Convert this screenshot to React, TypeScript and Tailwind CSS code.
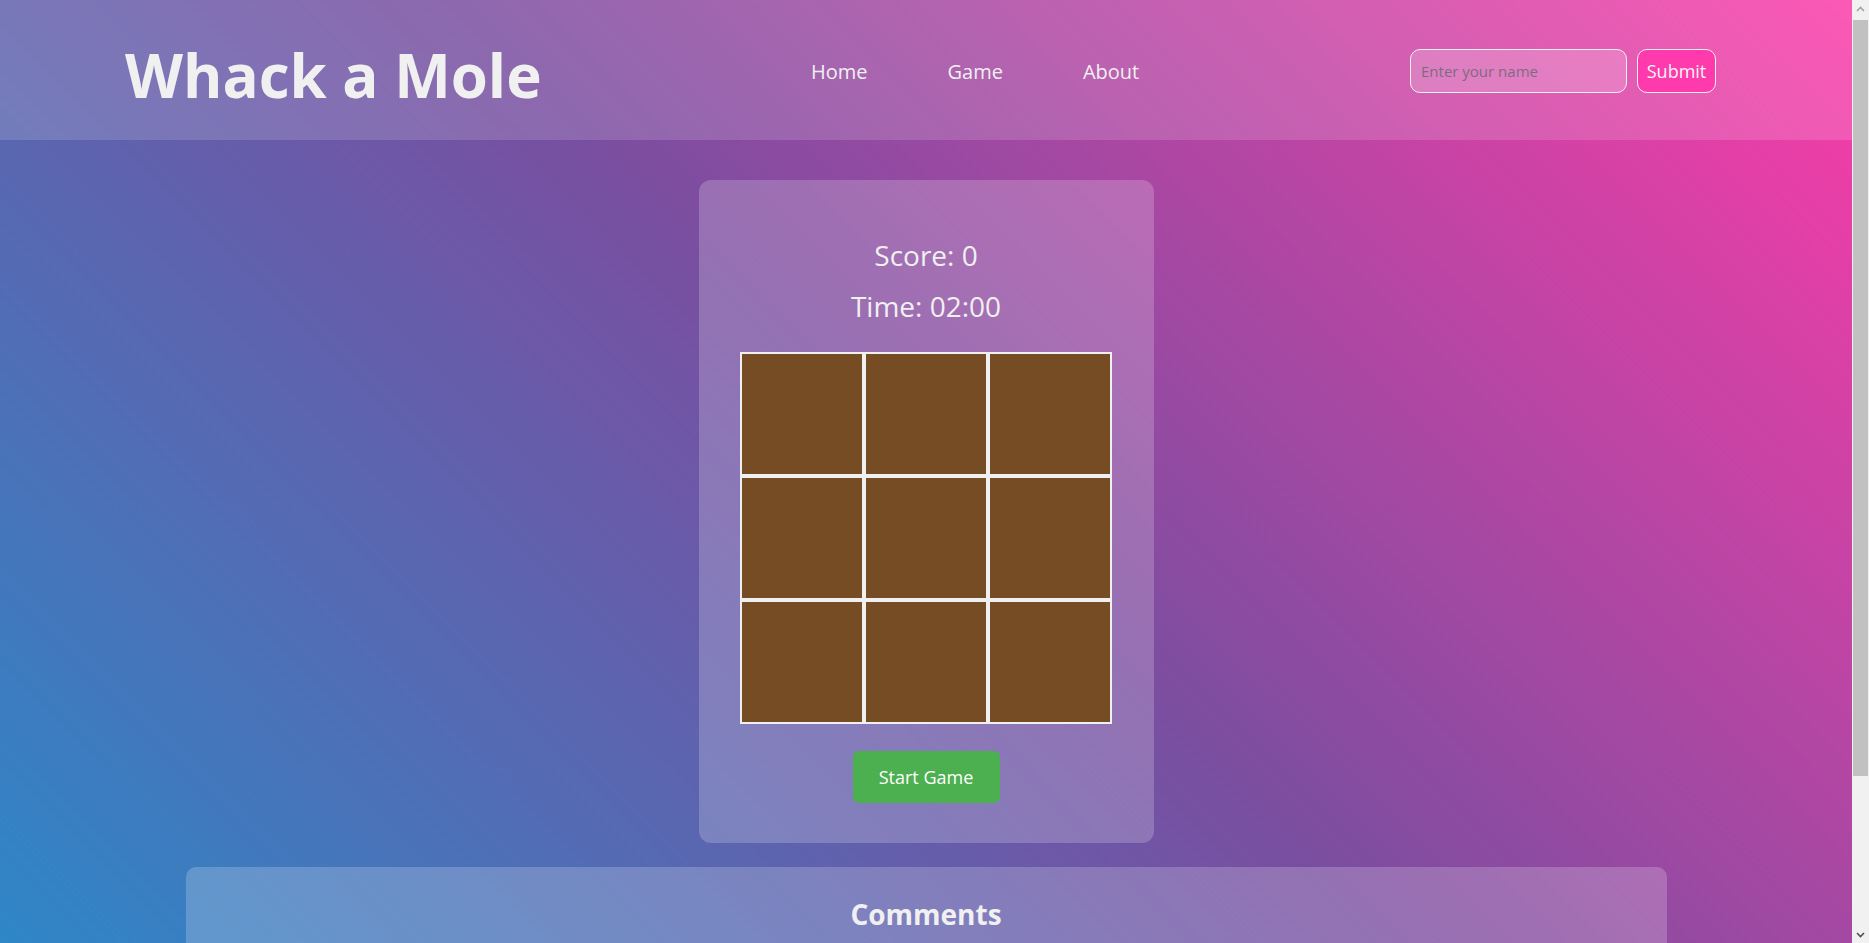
import React, { useState } from "react";

const font = { fontFamily: '"Open Sans", "Noto Sans", Arial, sans-serif' };

export default function App() {
  const [name, setName] = useState("");
  const holes = Array.from({ length: 9 }, (_, i) => i);

  return (
    <div className="flex h-[943px] w-full overflow-hidden" style={font}>
      {/* page */}
      <div className="flex h-full flex-1 flex-col overflow-hidden bg-[linear-gradient(45deg,#2e87c7_0%,#7a4ea0_50%,#fb3ca8_100%)]">
        <div className="h-px w-full bg-[#1c1c1c]" />

        {/* header */}
        <header className="flex h-[140px] shrink-0 items-center bg-white/15 pl-[125px] pr-[136px]">
          <div className="w-[686px] pt-[10px]">
            <h1 className="text-[60px] font-bold leading-none text-[#f0f0f0]">Whack a Mole</h1>
          </div>
          <nav className="flex gap-[80px] pt-[4px] text-[20px] text-[#f0f0f0]">
            <a href="#">Home</a>
            <a href="#">Game</a>
            <a href="#">About</a>
          </nav>
          <form className="ml-auto flex items-center gap-[10px] pt-[2px]" onSubmit={(e) => e.preventDefault()}>
            <input
              value={name}
              onChange={(e) => setName(e.target.value)}
              placeholder="Enter your name"
              className="h-[44px] w-[217px] rounded-[10px] border border-[#f2f2f2] bg-white/20 px-[10px] text-[15px] text-[#333] outline-none placeholder:text-[#7c6c82]"
            />
            <button
              type="submit"
              className="h-[44px] w-[79px] rounded-[10px] border border-[#f2f2f2] bg-[#fe3aad] text-[18px] text-[#f5f5f5]"
            >
              Submit
            </button>
          </form>
        </header>

        {/* game */}
        <section className="mx-auto mt-[40px] flex w-[455px] shrink-0 flex-col items-center rounded-[12px] bg-white/20 pb-[40px] pt-[58px]">
          <p className="text-[28px] leading-[34px] text-[#f0f0f0]">Score: 0</p>
          <p className="mt-[17px] text-[28px] leading-[34px] text-[#f0f0f0]">Time: 02:00</p>

          <div className="mt-[29px] grid grid-cols-3">
            {holes.map((h) => (
              <div key={h} className="h-[124px] w-[124px] border-2 border-[#f0f0f0] bg-[#754c24]" />
            ))}
          </div>

          <button className="mt-[27px] flex h-[52px] w-[147px] items-center justify-center rounded-[6px] bg-[#4caf50] text-[18px] text-white">
            Start Game
          </button>
        </section>

        {/* comments */}
        <section className="mx-auto mt-[24px] w-[1481px] shrink-0 rounded-t-[10px] bg-white/20 pt-[30px] text-center">
          <h2 className="text-[28px] font-bold leading-[34px] text-[#f0f0f0]">Comments</h2>
          <div className="h-[200px]" />
        </section>
      </div>

      {/* scrollbar */}
      <div className="flex h-full w-[17px] shrink-0 flex-col bg-[#f1f1f1]">
        <div className="flex h-[17px] items-center justify-center">
          <svg width="9" height="6" viewBox="0 0 9 6">
            <path d="M1 5 L4.5 1.5 L8 5" fill="none" stroke="#a3a3a3" strokeWidth="1.6" />
          </svg>
        </div>
        <div className="mx-[1px] mt-[3px] h-[756px] bg-[#c1c1c1]" />
        <div className="flex-1" />
        <div className="flex h-[17px] items-center justify-center">
          <svg width="9" height="6" viewBox="0 0 9 6">
            <path d="M1 1 L4.5 4.5 L8 1" fill="none" stroke="#505050" strokeWidth="1.6" />
          </svg>
        </div>
      </div>
    </div>
  );
}
